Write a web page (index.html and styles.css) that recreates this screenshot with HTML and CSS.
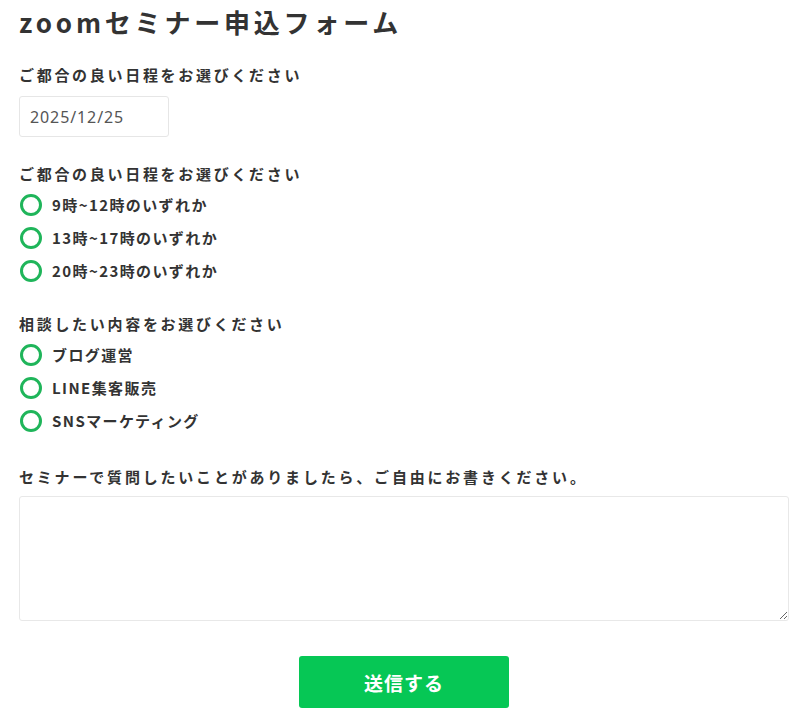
FILE: index.html
```html
<!DOCTYPE html>
<html lang="ja">
<head>
<meta charset="utf-8">
<title>zoomセミナー申込フォーム</title>
<link rel="stylesheet" href="styles.css">
</head>
<body>
<form class="form">
  <h1 class="title">zoomセミナー申込フォーム</h1>

  <div class="group group-date">
    <p class="label">ご都合の良い日程をお選びください</p>
    <input class="date" type="text" value="2025/12/25" readonly>
  </div>

  <div class="group">
    <p class="label">ご都合の良い日程をお選びください</p>
    <div class="options">
      <label class="option"><input class="radio" type="radio" name="time"><span>9時~12時のいずれか</span></label>
      <label class="option"><input class="radio" type="radio" name="time"><span>13時~17時のいずれか</span></label>
      <label class="option"><input class="radio" type="radio" name="time"><span>20時~23時のいずれか</span></label>
    </div>
  </div>

  <div class="group">
    <p class="label">相談したい内容をお選びください</p>
    <div class="options">
      <label class="option"><input class="radio" type="radio" name="topic"><span>ブログ運営</span></label>
      <label class="option"><input class="radio" type="radio" name="topic"><span>LINE集客販売</span></label>
      <label class="option"><input class="radio" type="radio" name="topic"><span>SNSマーケティング</span></label>
    </div>
  </div>

  <div class="group group-text">
    <p class="label label-long">セミナーで質問したいことがありましたら、ご自由にお書きください。</p>
    <textarea class="textarea"></textarea>
  </div>

  <div class="actions">
    <button class="submit" type="button">送信する</button>
  </div>
</form>
</body>
</html>
```

FILE: styles.css
```css
* { box-sizing: border-box; }

html, body {
  margin: 0;
  background: #ffffff;
}

body {
  font-family: "Noto Sans CJK JP", "Noto Sans", sans-serif;
  color: #333333;
  padding: 4px 11px 0 19px;
}

.form {
  display: flex;
  flex-direction: column;
}

.title {
  margin: 0;
  font-size: 26px;
  line-height: 36px;
  font-weight: 700;
  letter-spacing: 3.8px;
  color: #333333;
}

.group {
  display: flex;
  flex-direction: column;
  margin-top: 26px;
}

.group-date {
  margin-top: 24px;
}

.label {
  margin: 0;
  font-size: 15px;
  line-height: 22px;
  font-weight: 700;
  letter-spacing: 2.7px;
  color: #333333;
}

.label-long {
  letter-spacing: 2.8px;
}

.date {
  margin-top: 10px;
  width: 150px;
  height: 41px;
  border: 1px solid #e6e6e6;
  border-radius: 3px;
  padding: 0 10px;
  font-family: "Noto Sans", "Noto Sans CJK JP", sans-serif;
  font-size: 16px;
  letter-spacing: 0.9px;
  color: #555555;
  background: #ffffff;
  outline: none;
}

.options {
  display: flex;
  flex-direction: column;
  margin-top: 3px;
}

.option {
  display: flex;
  align-items: center;
  gap: 10px;
  height: 33px;
  font-size: 15px;
  font-weight: 700;
  letter-spacing: 1.4px;
  color: #333333;
  padding-left: 1px;
}

.radio {
  appearance: none;
  -webkit-appearance: none;
  margin: 0;
  width: 22px;
  height: 22px;
  border: 3px solid #1fb55a;
  border-radius: 50%;
  background: #ffffff;
  flex: none;
}

.group-text {
  margin-top: 29px;
}

.textarea {
  margin-top: 8px;
  width: 100%;
  height: 125px;
  border: 1px solid #e8e8e8;
  border-radius: 3px;
  padding: 8px;
  font-family: "Noto Sans CJK JP", sans-serif;
  font-size: 15px;
  resize: both;
  outline: none;
}

.actions {
  display: flex;
  justify-content: center;
  margin-top: 35px;
}

.submit {
  width: 210px;
  height: 52px;
  border: none;
  border-radius: 3px;
  background: #06c755;
  color: #ffffff;
  font-family: "Noto Sans CJK JP", sans-serif;
  font-size: 19px;
  font-weight: 700;
  letter-spacing: 1px;
  cursor: pointer;
}
```
